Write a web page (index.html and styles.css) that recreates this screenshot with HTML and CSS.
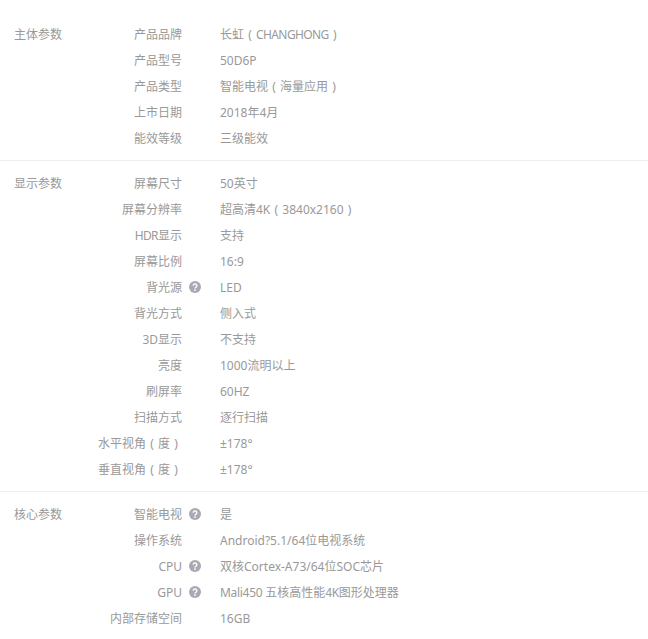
FILE: index.html
```html
<!DOCTYPE html>
<html lang="zh-CN">
<head>
<meta charset="utf-8">
<title>产品参数</title>
<link rel="stylesheet" href="styles.css">
</head>
<body>
<main class="params">
  <section class="group">
    <h3 class="group-title">主体参数</h3>
    <dl class="rows">
      <div class="row"><dt class="name">产品品牌</dt><dd class="value">长虹<span class="paren">(</span><span class="tighter">CHANGHONG</span><span class="paren">)</span></dd></div>
      <div class="row"><dt class="name">产品型号</dt><dd class="value">50D6P</dd></div>
      <div class="row"><dt class="name">产品类型</dt><dd class="value">智能电视<span class="paren">(</span>海量应用<span class="paren">)</span></dd></div>
      <div class="row"><dt class="name">上市日期</dt><dd class="value">2018年4月</dd></div>
      <div class="row"><dt class="name">能效等级</dt><dd class="value">三级能效</dd></div>
    </dl>
  </section>
  <section class="group">
    <h3 class="group-title">显示参数</h3>
    <dl class="rows">
      <div class="row"><dt class="name">屏幕尺寸</dt><dd class="value">50英寸</dd></div>
      <div class="row"><dt class="name">屏幕分辨率</dt><dd class="value">超高清4K<span class="paren">(</span>3840x2160<span class="paren">)</span></dd></div>
      <div class="row"><dt class="name"><span class="tighter">HDR</span>显示</dt><dd class="value">支持</dd></div>
      <div class="row"><dt class="name">屏幕比例</dt><dd class="value">16:9</dd></div>
      <div class="row"><dt class="name">背光源</dt><dd class="help"><svg class="help-icon" viewBox="0 0 12 12"><circle cx="6" cy="6" r="6" fill="#a9a9b3"/><path d="M4.2 4.7a1.8 1.8 0 1 1 2.8 1.5c-.7.4-1 .7-1 1.4" fill="none" stroke="#fff" stroke-width="1.4"/><rect x="5.2" y="8.4" width="1.6" height="1.5" fill="#fff"/></svg></dd><dd class="value">LED</dd></div>
      <div class="row"><dt class="name">背光方式</dt><dd class="value">侧入式</dd></div>
      <div class="row"><dt class="name">3D显示</dt><dd class="value">不支持</dd></div>
      <div class="row"><dt class="name">亮度</dt><dd class="value">1000流明以上</dd></div>
      <div class="row"><dt class="name">刷屏率</dt><dd class="value">60HZ</dd></div>
      <div class="row"><dt class="name">扫描方式</dt><dd class="value">逐行扫描</dd></div>
      <div class="row"><dt class="name">水平视角<span class="paren">(</span>度<span class="paren">)</span></dt><dd class="value">±178°</dd></div>
      <div class="row"><dt class="name">垂直视角<span class="paren">(</span>度<span class="paren">)</span></dt><dd class="value">±178°</dd></div>
    </dl>
  </section>
  <section class="group">
    <h3 class="group-title">核心参数</h3>
    <dl class="rows">
      <div class="row"><dt class="name">智能电视</dt><dd class="help"><svg class="help-icon" viewBox="0 0 12 12"><circle cx="6" cy="6" r="6" fill="#a9a9b3"/><path d="M4.2 4.7a1.8 1.8 0 1 1 2.8 1.5c-.7.4-1 .7-1 1.4" fill="none" stroke="#fff" stroke-width="1.4"/><rect x="5.2" y="8.4" width="1.6" height="1.5" fill="#fff"/></svg></dd><dd class="value">是</dd></div>
      <div class="row"><dt class="name">操作系统</dt><dd class="value">Android?5.1/64位电视系统</dd></div>
      <div class="row"><dt class="name">CPU</dt><dd class="help"><svg class="help-icon" viewBox="0 0 12 12"><circle cx="6" cy="6" r="6" fill="#a9a9b3"/><path d="M4.2 4.7a1.8 1.8 0 1 1 2.8 1.5c-.7.4-1 .7-1 1.4" fill="none" stroke="#fff" stroke-width="1.4"/><rect x="5.2" y="8.4" width="1.6" height="1.5" fill="#fff"/></svg></dd><dd class="value">双核Cortex-A73/64位SOC芯片</dd></div>
      <div class="row"><dt class="name">GPU</dt><dd class="help"><svg class="help-icon" viewBox="0 0 12 12"><circle cx="6" cy="6" r="6" fill="#a9a9b3"/><path d="M4.2 4.7a1.8 1.8 0 1 1 2.8 1.5c-.7.4-1 .7-1 1.4" fill="none" stroke="#fff" stroke-width="1.4"/><rect x="5.2" y="8.4" width="1.6" height="1.5" fill="#fff"/></svg></dd><dd class="value"><span class="tight">Mali450 </span>五核高性能<span class="tight">4K</span>图形处理器</dd></div>
      <div class="row"><dt class="name">内部存储空间</dt><dd class="value">16GB</dd></div>
    </dl>
  </section>
</main>
</body>
</html>
```

FILE: styles.css
```css
html, body {
  margin: 0;
  padding: 0;
  background: #fff;
  overflow: hidden;
}
body {
  font-family: "Noto Sans", "Noto Sans CJK SC", sans-serif;
  font-size: 12px;
  color: #999;
}
.params {
  padding-top: 12px;
}
.group {
  display: flex;
  padding: 9px 0 9px 14px;
  border-bottom: 1px solid #eee;
}
.group:last-child {
  border-bottom: 0;
}
.group-title {
  display: flex;
  align-items: center;
  flex: none;
  width: 48px;
  height: 26px;
  margin: 0;
  font-size: 12px;
  font-weight: 400;
  white-space: nowrap;
}
.rows {
  margin: 0;
}
.row {
  display: flex;
  align-items: center;
  height: 26px;
}
.name {
  width: 120px;
  text-align: right;
  white-space: nowrap;
}
.value {
  margin: 0 0 0 38px;
  white-space: nowrap;
}
.paren {
  display: inline-block;
  width: 12px;
  text-align: center;
}
.tight {
  letter-spacing: -0.3px;
}
.tighter {
  letter-spacing: -0.6px;
}
.help {
  margin: 0 -19px 0 7px;
  width: 12px;
  height: 12px;
}
.help-icon {
  display: block;
  width: 12px;
  height: 12px;
}
```
